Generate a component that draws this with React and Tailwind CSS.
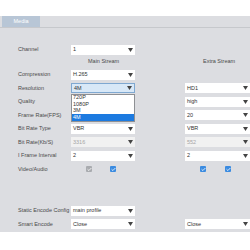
import { Check } from "lucide-react";

function Arrow() {
  return (
    <svg width="5" height="4" viewBox="0 0 5 4" className="shrink-0">
      <path d="M0 0H5L2.5 4Z" fill="#444" />
    </svg>
  );
}

function Select({ value, wide, arrow = true, active, disabled }) {
  return (
    <div
      className={`flex items-center justify-between h-[10px] px-[2px] ${wide ? "w-[65px]" : "w-[64px]"} ${
        active ? "bg-[#d8e8f7] border border-[#7fa8d1]" : disabled ? "bg-[#f1f1f1]" : "bg-white"
      } ${disabled ? "text-[#a6a6a6]" : "text-[#333]"}`}
    >
      <span>{value}</span>
      {arrow && <Arrow />}
    </div>
  );
}

function Box({ checked }) {
  return (
    <div
      className={`w-[6px] h-[6px] flex items-center justify-center rounded-[1px] ${
        checked ? "bg-[#3b8be0]" : "bg-[#a9abaf]"
      }`}
    >
      <Check size={5} strokeWidth={4} color="white" />
    </div>
  );
}

function Row({ label, main, extra, tall = true }) {
  return (
    <div className={`flex items-center ${tall ? "h-[13.5px]" : "h-[12px]"}`}>
      <div className="w-[71px] pl-[18px] text-[#4a4a4a]">{label}</div>
      <div className="w-[114px] relative">{main}</div>
      <div className="flex-1">{extra}</div>
    </div>
  );
}

export default function App() {
  return (
    <div
      className="w-[250px] h-[250px] bg-white overflow-hidden text-[5.5px] leading-none"
      style={{ fontFamily: "'Liberation Sans', Arial, sans-serif" }}
    >
      <div className="mt-[16px] h-[216px] bg-[#dcdde1]">
        <div className="h-[12px] border-b border-[#c6c8cc] flex items-end pl-[2px]">
          <div className="w-[38px] h-[11px] bg-[#b8c6d6] text-white flex items-center justify-center">
            Media
          </div>
        </div>

        <div className="pt-[16px]">
          <Row label="Channel" main={<Select value="1" />} tall={false} />
          <div className="flex h-[12px] items-center text-[#4a4a4a]">
            <div className="w-[88px]" />
            <div className="w-[115px]">Main Stream</div>
            <div>Extra Stream</div>
          </div>
          <Row label="Compression" main={<Select value="H.265" />} />
          <Row
            label="Resolution"
            main={
              <>
                <Select value="4M" active />
                <div className="absolute left-0 top-[10.5px] w-[64px] bg-white border border-[#8e9094] z-10 text-[#333]">
                  <div className="h-[6.5px] flex items-center px-[1px]">720P</div>
                  <div className="h-[6.5px] flex items-center px-[1px]">1080P</div>
                  <div className="h-[6.5px] flex items-center px-[1px]">3M</div>
                  <div className="h-[6.5px] flex items-center px-[1px] bg-[#1c7ae0] text-white">4M</div>
                </div>
              </>
            }
            extra={<Select value="HD1" wide />}
          />
          <Row label="Quality" main={<Select value="" />} extra={<Select value="high" wide />} />
          <Row label="Frame Rate(FPS)" main={<Select value="" />} extra={<Select value="20" wide />} />
          <Row label="Bit Rate Type" main={<Select value="VBR" />} extra={<Select value="VBR" wide />} />
          <Row
            label="Bit Rate(Kb/S)"
            main={<Select value="3316" disabled />}
            extra={<Select value="552" disabled wide />}
          />
          <Row label="I Frame Interval" main={<Select value="2" />} extra={<Select value="2" wide />} />
          <Row
            label="Video/Audio"
            main={
              <div className="flex gap-[18px] pl-[15px]">
                <Box />
                <Box checked />
              </div>
            }
            extra={
              <div className="flex gap-[19px] pl-[15px]">
                <Box checked />
                <Box checked />
              </div>
            }
          />
          <div className="h-[28px]" />
          <Row label="Static Encode Config" main={<Select value="main profile" />} />
          <Row label="Smart Encode" main={<Select value="Close" />} extra={<Select value="Close" wide />} />
        </div>
      </div>
    </div>
  );
}
